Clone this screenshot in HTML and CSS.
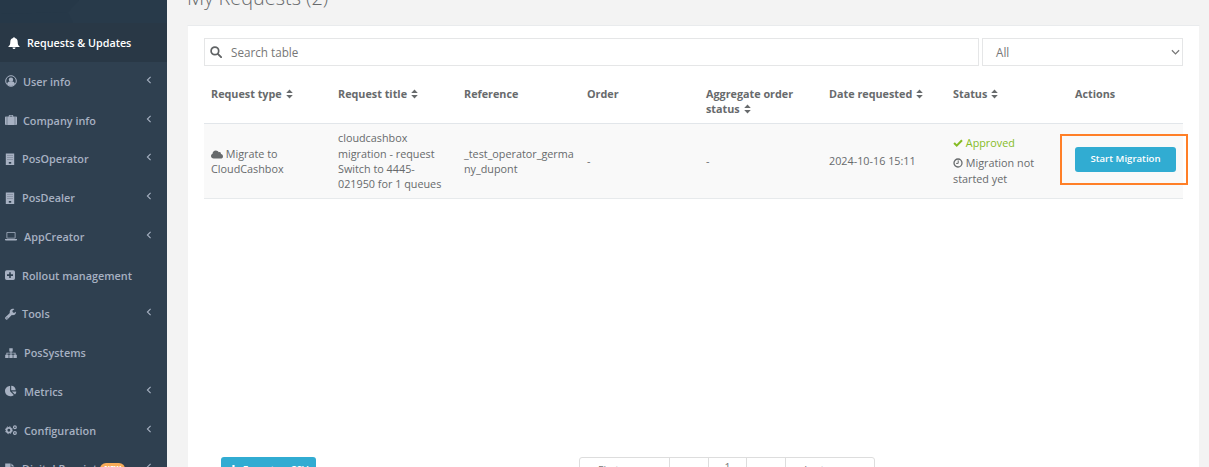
FILE: index.html
```html
<!DOCTYPE html>
<html lang="en">
<head>
<meta charset="utf-8">
<title>My Requests</title>
<link rel="stylesheet" href="styles.css">
</head>
<body>
<svg class="defs" aria-hidden="true">
  <symbol id="chev" viewBox="0 0 6 8"><path d="M4.6.8 1.4 4l3.2 3.2" fill="none" stroke="currentColor" stroke-width="1.1"/></symbol>
  <symbol id="sort" viewBox="0 0 7 10"><path d="M3.5.5 6.8 4H.2zM3.5 9.5 6.8 6H.2z"/></symbol>
  <symbol id="building" viewBox="0 0 10 12"><path d="M.8.500h8.400v11.500H.8z"/><path d="M2.500 2v1h1V2zm2 0v1h1V2zm2 0v1h1V2zM2.500 4v1h1V4zm2 0v1h1V4zm2 0v1h1V4zM2.500 6v1h1V6zm2 0v1h1V6zm2 0v1h1V6z" fill="#2f4050" opacity=".5"/><path d="M3.800 9v1.700h2.400V9z" fill="#2f4050"/></symbol>
</svg>
<div class="app">
  <nav class="sidebar">
    <div class="brand"><svg viewBox="0 0 167 24" preserveAspectRatio="none"><path d="M0 14 68 13 79 0H0z" fill="#263848"/><path d="M68 13 73 24H167V0H79z" fill="#283a4a"/></svg></div>
    <a class="item active"><svg class="ico" viewBox="0 0 12 12" style="width:12px"><path d="M6 .2c.6 0 .9.400.8.9 1.900.4 2.900 1.900 2.900 3.800 0 2.500.8 3.700 1.900 4.600v.5H.4v-.5C1.500 8.600 2.300 7.400 2.300 4.900c0-1.900 1-3.400 2.900-3.800C5.100.6 5.400.2 6 .2zM4.500 10.400h3C7.400 11.400 6.800 12 6 12s-1.400-.6-1.500-1.600z"/></svg><span>Requests &amp; Updates</span></a>
    <a class="item"><svg class="ico" viewBox="0 0 12 12" style="width:12px"><circle cx="6" cy="6" r="5.300" fill="none" stroke="currentColor"/><circle cx="6" cy="4.700" r="2.200"/><path d="M2 9c.5-1.700 1.300-2.400 2.300-2.600C5 7.200 7 7.200 7.700 6.400 8.700 6.600 9.500 7.300 10 9c-2 2.600-6 2.600-8 0z"/></svg><span>User info</span><svg class="chev"><use href="#chev"/></svg></a>
    <a class="item"><svg class="ico" viewBox="0 0 12 12" style="width:12px"><path d="M0 3.500Q0 2.600.9 2.600h.9v8.400H.9Q0 11 0 10.100zM2.200 2.600h1.600V1.500q0-.6.6-.6h3.200q.6 0 .6.6v1.100h1.600V11H2.200zM4.700 1.800v.8h2.600v-.8zM10.200 2.600h.9q.9 0 .9.900v6.600q0 .9-.9.900h-.9z"/></svg><span>Company info</span><svg class="chev"><use href="#chev"/></svg></a>
    <a class="item"><svg class="ico" style="width:10px"><use href="#building"/></svg><span class="wide">PosOperator</span><svg class="chev"><use href="#chev"/></svg></a>
    <a class="item"><svg class="ico" style="width:10px"><use href="#building"/></svg><span class="wide">PosDealer</span><svg class="chev"><use href="#chev"/></svg></a>
    <a class="item"><svg class="ico" viewBox="0 0 12 12" style="width:12px"><path fill-rule="evenodd" d="M2.300 2h7.400q.8 0 .8.800v5q0 .8-.8.800H2.300q-.8 0-.8-.8v-5Q1.500 2 2.300 2zM2.300 2.800v5h7.400v-5zM0 9.100h12v.6q0 .7-.9.700H.9Q0 10.400 0 9.700z"/></svg><span class="far">AppCreator</span><svg class="chev"><use href="#chev"/></svg></a>
    <a class="item"><svg class="ico" viewBox="0 0 10 12" style="width:10px"><path fill-rule="evenodd" d="M1.700 1.200h6.600Q10 1.200 10 2.900v6.400Q10 11 8.300 11H1.700Q0 11 0 9.300V2.900Q0 1.200 1.700 1.200zM4.200 3.200v2.100H2v1.600h2.200V9h1.600V6.900H8V5.300H5.800V3.200z"/></svg><span class="wide">Rollout management</span></a>
    <a class="item"><svg class="ico" viewBox="0 0 11 12" style="width:11px"><path fill-rule="evenodd" d="M.4 9.300 4.800 4.900C4.300 2.600 5.700.8 7.800.8c.6 0 1.100.1 1.600.4L7.500 2.500v1.600l1.500.8 1.900-1.200c.3 2.200-1.600 4-4.100 3.400L2.300 11.500c-.6.5-1.300.2-1.800-.4-.5-.5-.7-1.200-.1-1.800zm1.200.2v.9h.9v-.9z"/></svg><span>Tools</span><svg class="chev"><use href="#chev"/></svg></a>
    <a class="item"><svg class="ico" viewBox="0 0 12 12" style="width:12px"><path d="M4.300 1.200h3.400v3.200H6.500v1.300h4.100v2h1.200v3.200H8.400V7.700h1.200V6.600H6.500v1.100h1.200v3.200H4.300V7.700h1.200V6.600H2.400v1.100h1.200v3.200H.2V7.700h1.200v-2h4.100V4.400H4.300z"/></svg><span class="far">PosSystems</span></a>
    <a class="item"><svg class="ico" viewBox="0 0 12 12" style="width:12px"><path d="M5.100 1v5.300l3.700 3.600C5.300 13 0 10.600 0 6.100 0 3.300 2.300 1 5.100 1zM6.200.8c2.500 0 4.500 2 4.500 4.500H6.200zM6.900 6.400h4.400c0 1.200-.5 2.200-1.300 3z"/></svg><span class="far">Metrics</span><svg class="chev"><use href="#chev"/></svg></a>
    <a class="item"><svg class="ico" viewBox="0 0 12 12" style="width:12px"><g fill="none" stroke="currentColor"><circle cx="3.900" cy="6.200" r="2.300" stroke-width="1.700"/><circle cx="3.900" cy="6.200" r="3.500" stroke-width=".9" stroke-dasharray="1.400 1.350"/><circle cx="9.900" cy="3.200" r="1.400" stroke-width="1.200"/><circle cx="9.900" cy="9" r="1.400" stroke-width="1.200"/></g></svg><span class="far">Configuration</span><svg class="chev"><use href="#chev"/></svg></a>
    <a class="item"><svg class="ico" viewBox="0 0 10 12" style="width:10px"><path d="M.2.500h5.400v3.700h3.900V12H.2zM6.400.5l3 3h-3z"/></svg><span class="wide">Digital Receipt</span><b class="badge">NEW</b><svg class="chev"><use href="#chev"/></svg></a>
  </nav>
  <main class="main">
    <h1>My Requests (2)</h1>
    <section class="panel">
      <div class="filters">
        <div class="search"><svg viewBox="0 0 12 12"><circle cx="4.900" cy="4.900" r="3.800" fill="none" stroke="currentColor" stroke-width="1.700"/><path d="m7.800 7.800 3.300 3.300" stroke="currentColor" stroke-width="1.900" stroke-linecap="round"/></svg><span>Search table</span></div>
        <div class="select"><span>All</span><svg viewBox="0 0 8 6"><path d="m.8 1 3.200 3.300L7.200 1" fill="none" stroke="currentColor" stroke-width="1.100"/></svg></div>
      </div>
      <div class="row head">
        <div>Request type <svg class="sort"><use href="#sort"/></svg></div>
        <div>Request title <svg class="sort"><use href="#sort"/></svg></div>
        <div>Reference</div>
        <div>Order</div>
        <div>Aggregate order<br>status <svg class="sort"><use href="#sort"/></svg></div>
        <div>Date requested <svg class="sort"><use href="#sort"/></svg></div>
        <div>Status <svg class="sort"><use href="#sort"/></svg></div>
        <div>Actions</div>
      </div>
      <div class="row body">
        <div><svg class="cloud" viewBox="0 0 12 9"><path d="M2.700 8.600C1.100 8.600 0 7.500 0 6.100c0-1.100.6-1.900 1.600-2.300C1.500 1.800 2.900.4 4.800.4c1.400 0 2.400.7 2.900 1.900C9 1.700 10.300 2.600 9.900 4.100 11.200 4.400 12 5.200 12 6.400c0 1.300-1 2.200-2.300 2.200z"/></svg> Migrate to<br>CloudCashbox</div>
        <div>cloudcashbox<br>migration - request<br>Switch to 4445-<br>021950 for 1 queues</div>
        <div>_test_operator_germa<br>ny_dupont</div>
        <div>-</div>
        <div>-</div>
        <div>2024-10-16 15:11</div>
        <div class="status"><p class="ok"><svg viewBox="0 0 11 10"><path d="m1.200 5 2.900 2.900L9.900 2" fill="none" stroke="currentColor" stroke-width="2.300"/></svg> Approved</p><p><svg viewBox="0 0 10 10"><circle cx="5" cy="5" r="4" fill="none" stroke="currentColor" stroke-width="1.300"/><path d="M5.200 2.400v3H3.100" fill="none" stroke="currentColor"/></svg> Migration not<br>started yet</p></div>
        <div class="actions"><div class="highlight"><button>Start Migration</button></div></div>
      </div>
      <div class="footer">
        <button class="export"><svg viewBox="0 0 10 10"><path d="M3.800 0h2.400v4H9L5 8 1 4h2.800zM0 8.500h10V10H0z"/></svg>Export as CSV</button>
        <div class="pager"><span class="end">First</span><span class="mid">‹</span><span class="mid cur">1</span><span class="mid">›</span><span class="end">Last</span></div>
      </div>
    </section>
  </main>
</div>
</body>
</html>
```
FILE: styles.css
```css
* { box-sizing: border-box; }
body { margin: 0; height: 467px; overflow: hidden; font-family: "Open Sans", "Noto Sans", sans-serif; font-size: 10.8px; color: #676a6c; background: #f3f3f3; }
svg { fill: currentColor; }
.defs { position: absolute; width: 0; height: 0; }
.app { display: flex; height: 467px; overflow: hidden; }

.sidebar { width: 167px; flex: none; background: #2f4050; color: #a7b1c2; font-weight: 600; }
.brand { height: 23px; background: #263848; }
.brand svg { display: block; width: 167px; height: 23px; }
.item { display: flex; align-items: center; height: 38.75px; padding: 0 15px 0 5px; font-size: 10.85px; white-space: nowrap; }
.item.active { height: 39px; padding-left: 8px; background: #293846; color: #fff; }
.item.active span { margin-left: 7px; font-size: 10.75px; }
.ico { flex: none; height: 12px; }
.item span { margin-left: 6px; }
.item span.wide, .item span.far { margin-left: 7px; }
.chev { width: 6px; height: 8px; margin-left: auto; margin-top: -3px; }
.badge { margin-left: 3px; padding: 0 4px; border-radius: 6px; background: #f8ac59; color: #fff; font-size: 7px; line-height: 12px; width: 25px; text-align: center; }

.main { width: 1042px; flex: none; padding: 0 9px 0 20px; }
h1 { margin: -15px 0 0; height: 40px; font-size: 19.9px; font-weight: 300; line-height: 26px; color: #676a6c; }
.panel { height: 460px; padding: 12px 16px 0; background: #fff; border: 1px solid #e9ebed; border-left-color: #f3f3f3; border-right-color: #f3f3f3; }
.filters { display: flex; gap: 3px; height: 28px; }
.search, .select { display: flex; align-items: center; border: 1px solid #e5e6e7; color: #777; font-size: 11.7px; }
.search { width: 775px; padding-left: 5px; gap: 9px; }
.search svg { width: 12px; height: 12px; color: #606365; }
.select { width: 201px; padding: 0 2px 0 13px; justify-content: space-between; }
.select svg { width: 9px; height: 7px; }

.row { display: grid; grid-template-columns: 127px 126px 123px 119px 123px 124px 122px 115px; line-height: 15.4px; white-space: nowrap; }
.row > div { padding: 0 0 0 7px; }
.head { height: 58px; padding-top: 20px; border-bottom: 1px solid #e2e6ea; font-size: 10.8px; font-weight: 700; }
.sort { width: 7px; height: 10px; vertical-align: -1px; margin-left: 1px; }
.body { height: 75px; align-items: center; background: #f9f9f9; border-bottom: 1px solid #e7eaec; }
.cloud { width: 12px; height: 9px; vertical-align: -1px; }
.status { line-height: 16px; }
.status p { margin: 0; }
.status .ok { margin-bottom: 4px; color: #86bc25; }
.status svg { width: 10px; height: 10px; vertical-align: -1px; }
.row > .actions { padding: 0; margin-top: -4px; }
.highlight { width: 128px; height: 51px; margin-left: -8px; padding: 11px 0 0 13px; border: 2px solid #ff7f27; }
.highlight button { display: block; width: 101px; height: 25px; padding: 0 0 2px; border: 0; border-radius: 3px; background: #31acd2; color: #fff; font: 600 9.6px "Open Sans", sans-serif; }
.footer { display: flex; align-items: flex-start; margin-top: 258px; padding-left: 17px; }
.export { display: flex; align-items: center; justify-content: center; gap: 5px; width: 95px; height: 25px; padding: 0; border: 0; border-radius: 3px; background: #31acd2; color: #fff; font: 600 10px "Open Sans", sans-serif; }
.export svg { width: 9px; height: 9px; }
.pager { display: flex; width: 296px; height: 26px; margin-left: 263px; border: 1px solid #ddd; border-radius: 3px; line-height: 24px; text-align: center; color: #777; font-size: 10.5px; }
.pager span + span { border-left: 1px solid #ddd; }
.pager .end { width: 89px; padding-left: 18px; text-align: left; }
.pager .mid { width: 39px; }
.pager .cur { line-height: 19px; }
```
